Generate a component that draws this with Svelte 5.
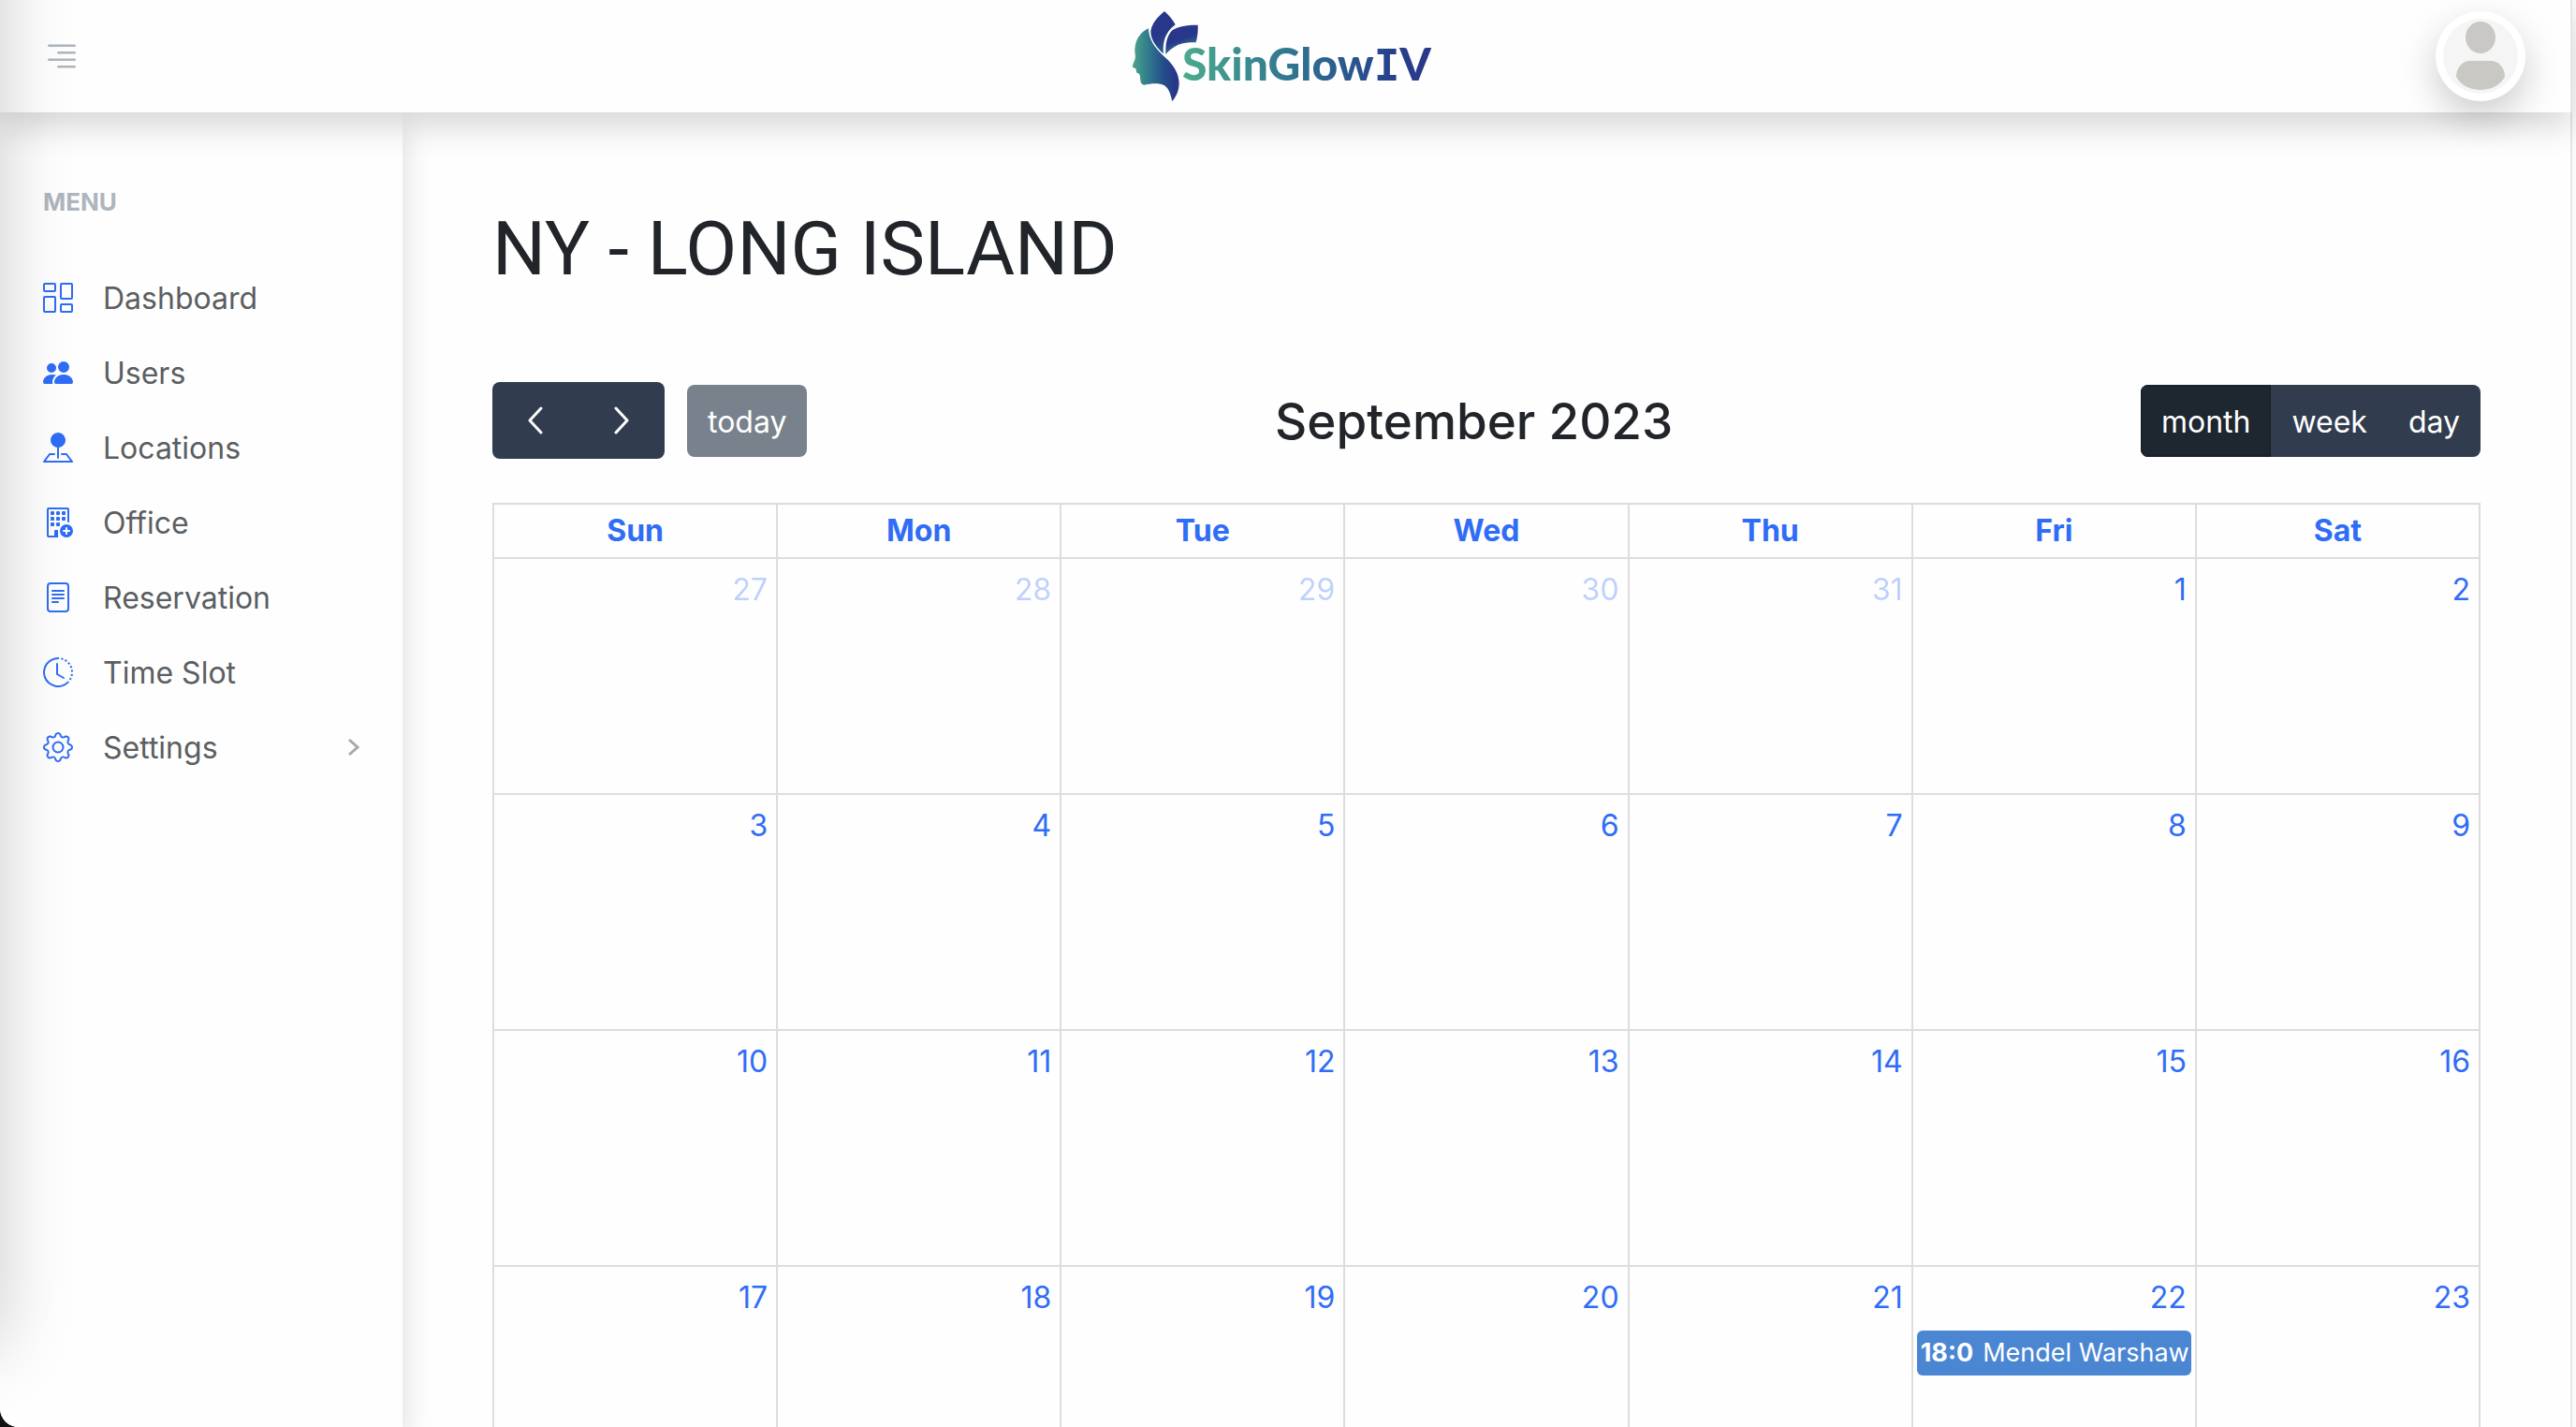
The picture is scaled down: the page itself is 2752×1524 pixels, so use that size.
<script>
  const menu = [
    { label: 'Dashboard', icon: 'dashboard' },
    { label: 'Users', icon: 'users' },
    { label: 'Locations', icon: 'locations' },
    { label: 'Office', icon: 'office' },
    { label: 'Reservation', icon: 'reservation' },
    { label: 'Time Slot', icon: 'clock' },
    { label: 'Settings', icon: 'gear', expandable: true }
  ];

  const icons = {
    dashboard: [
      'M6 1v3H1V1h5zM1 0a1 1 0 0 0-1 1v3a1 1 0 0 0 1 1h5a1 1 0 0 0 1-1V1a1 1 0 0 0-1-1H1zm14 12v3h-5v-3h5zm-5-1a1 1 0 0 0-1 1v3a1 1 0 0 0 1 1h5a1 1 0 0 0 1-1v-3a1 1 0 0 0-1-1h-5zM6 8v7H1V8h5zM1 7a1 1 0 0 0-1 1v7a1 1 0 0 0 1 1h5a1 1 0 0 0 1-1V8a1 1 0 0 0-1-1H1zm14-6v7h-5V1h5zm-5-1a1 1 0 0 0-1 1v7a1 1 0 0 0 1 1h5a1 1 0 0 0 1-1V1a1 1 0 0 0-1-1h-5z'
    ],
    users: [
      'M7 14s-1 0-1-1 1-4 5-4 5 3 5 4-1 1-1 1H7Zm4-6a3 3 0 1 0 0-6 3 3 0 0 0 0 6Zm-5.784 6A2.238 2.238 0 0 1 5 13c0-1.355.68-2.75 1.936-3.72A6.325 6.325 0 0 0 5 9c-4 0-5 3-5 4s1 1 1 1h4.216ZM4.5 8a2.5 2.5 0 1 0 0-5 2.5 2.5 0 0 0 0 5Z'
    ],
    locations: [
      'M3.1 11.2a.5.5 0 0 1 .4-.2H6a.5.5 0 0 1 0 1H3.75L1.5 15h13l-2.25-3H10a.5.5 0 0 1 0-1h2.5a.5.5 0 0 1 .4.2l3 4a.5.5 0 0 1-.4.8H.5a.5.5 0 0 1-.4-.8l3-4z',
      'M4 4a4 4 0 1 1 4.5 3.969V13.5a.5.5 0 0 1-1 0V7.97A4 4 0 0 1 4 3.999z'
    ],
    office: [
      'M12.5 16a3.5 3.5 0 1 0 0-7 3.5 3.5 0 0 0 0 7Zm.5-5v1h1a.5.5 0 0 1 0 1h-1v1a.5.5 0 0 1-1 0v-1h-1a.5.5 0 0 1 0-1h1v-1a.5.5 0 0 1 1 0Z',
      'M2 1a1 1 0 0 1 1-1h10a1 1 0 0 1 1 1v6.5a.5.5 0 0 1-1 0V1H3v14h3v-2.5a.5.5 0 0 1 .5-.5H8v4H3a1 1 0 0 1-1-1V1Z',
      ...[[4, 2], [7, 2], [10, 2], [4, 5], [7, 5], [10, 5], [4, 8], [7, 8]].map(
        ([x, y]) => `M${x + 0.5} ${y}h1a.5.5 0 0 1 .5.5v1a.5.5 0 0 1-.5.5h-1a.5.5 0 0 1-.5-.5v-1a.5.5 0 0 1 .5-.5z`
      )
    ],
    reservation: [
      'M5 4a.5.5 0 0 0 0 1h6a.5.5 0 0 0 0-1H5zm-.5 2.5A.5.5 0 0 1 5 6h6a.5.5 0 0 1 0 1H5a.5.5 0 0 1-.5-.5zM5 8a.5.5 0 0 0 0 1h6a.5.5 0 0 0 0-1H5zm0 2a.5.5 0 0 0 0 1h3a.5.5 0 0 0 0-1H5z',
      'M2 2a2 2 0 0 1 2-2h8a2 2 0 0 1 2 2v12a2 2 0 0 1-2 2H4a2 2 0 0 1-2-2V2zm10-1H4a1 1 0 0 0-1 1v12a1 1 0 0 0 1 1h8a1 1 0 0 0 1-1V2a1 1 0 0 0-1-1z'
    ],
    clock: [
      'M8.515 1.019A7 7 0 0 0 8 1V0a8 8 0 0 1 .589.022l-.074.997zm2.004.45a7.003 7.003 0 0 0-.985-.299l.219-.976c.383.086.76.2 1.126.342l-.36.933zm1.37.71a7.01 7.01 0 0 0-.439-.27l.493-.87a8.025 8.025 0 0 1 .979.654l-.615.789a6.996 6.996 0 0 0-.418-.302zm1.834 1.79a6.99 6.99 0 0 0-.653-.796l.724-.69c.27.285.52.59.747.91l-.818.576zm.744 1.352a7.08 7.08 0 0 0-.214-.468l.893-.45a7.976 7.976 0 0 1 .45 1.088l-.95.313a7.023 7.023 0 0 0-.179-.483zm.53 2.507a6.991 6.991 0 0 0-.1-1.025l.985-.17c.067.386.106.778.116 1.17l-1 .025zm-.131 1.538c.033-.17.06-.339.081-.51l.993.123a7.957 7.957 0 0 1-.23 1.155l-.964-.267c.046-.165.086-.332.12-.501zm-.952 2.379c.184-.29.346-.594.486-.908l.914.405c-.16.36-.345.706-.555 1.038l-.845-.535zm-.964 1.205c.122-.122.239-.248.35-.378l.758.653a8.073 8.073 0 0 1-.401.432l-.707-.707z',
      'M8 1a7 7 0 1 0 4.95 11.95l.707.707A8.001 8.001 0 1 1 8 0v1z',
      'M7.5 3a.5.5 0 0 1 .5.5v5.21l3.248 1.856a.5.5 0 0 1-.496.868l-3.5-2A.5.5 0 0 1 7 9V3.5a.5.5 0 0 1 .5-.5z'
    ],
    gear: [
      'M8 4.754a3.246 3.246 0 1 0 0 6.492 3.246 3.246 0 0 0 0-6.492zM5.754 8a2.246 2.246 0 1 1 4.492 0 2.246 2.246 0 0 1-4.492 0z',
      'M9.796 1.343c-.527-1.79-3.065-1.79-3.592 0l-.094.319a.873.873 0 0 1-1.255.52l-.292-.16c-1.64-.892-3.433.902-2.54 2.541l.159.292a.873.873 0 0 1-.52 1.255l-.319.094c-1.79.527-1.79 3.065 0 3.592l.319.094a.873.873 0 0 1 .52 1.255l-.16.292c-.892 1.64.901 3.434 2.541 2.54l.292-.159a.873.873 0 0 1 1.255.52l.094.319c.527 1.79 3.065 1.79 3.592 0l.094-.319a.873.873 0 0 1 1.255-.52l.292.16c1.64.893 3.434-.902 2.54-2.541l-.159-.292a.873.873 0 0 1 .52-1.255l.319-.094c1.79-.527 1.79-3.065 0-3.592l-.319-.094a.873.873 0 0 1-.52-1.255l.16-.292c.893-1.64-.902-3.433-2.541-2.54l-.292.159a.873.873 0 0 1-1.255-.52l-.094-.319zm-2.633.283c.246-.835 1.428-.835 1.674 0l.094.319a1.873 1.873 0 0 0 2.693 1.115l.291-.16c.764-.415 1.6.42 1.184 1.185l-.159.292a1.873 1.873 0 0 0 1.116 2.692l.318.094c.835.246.835 1.428 0 1.674l-.319.094a1.873 1.873 0 0 0-1.115 2.693l.16.291c.415.764-.42 1.6-1.185 1.184l-.291-.159a1.873 1.873 0 0 0-2.693 1.116l-.094.318c-.246.835-1.428.835-1.674 0l-.094-.319a1.873 1.873 0 0 0-2.692-1.115l-.292.16c-.764.415-1.6-.42-1.184-1.185l.159-.291A1.873 1.873 0 0 0 1.945 8.93l-.319-.094c-.835-.246-.835-1.428 0-1.674l.319-.094A1.873 1.873 0 0 0 3.06 4.377l-.16-.292c-.415-.764.42-1.6 1.185-1.184l.292.159a1.873 1.873 0 0 0 2.692-1.115l.094-.319z'
    ]
  };

  const weekdays = ['Sun', 'Mon', 'Tue', 'Wed', 'Thu', 'Fri', 'Sat'];
  const events = { 22: { time: '18:0', title: 'Mendel Warshaw' } };

  // Four weeks starting on Sunday, August 27
  const weeks = Array.from({ length: 4 }, (_, w) =>
    Array.from({ length: 7 }, (_, d) => {
      const n = w * 7 + d - 4;
      return n > 0 ? { day: n, other: false, event: events[n] } : { day: n + 31, other: true };
    })
  );

  const views = ['month', 'week', 'day'];
  let view = $state('month');
</script>

<div class="shell">
  <header class="topbar">
    <button class="toggle" aria-label="Toggle menu">
      <svg viewBox="0 0 16 16" fill="none" stroke="currentColor" stroke-linecap="round">
        <path d="M2.5 3.5h11M6.5 6.5h7M2.5 9.5h11M6.5 12.5h7" />
      </svg>
    </button>
    <a class="brand" href="#home">
      <svg viewBox="63 30 216 297" aria-hidden="true">
        <defs>
          <linearGradient id="face" x1="0" x2="1">
            <stop offset="0.05" stop-color="#479f8c" />
            <stop offset="0.3" stop-color="#337f8c" />
            <stop offset="0.65" stop-color="#24508a" />
            <stop offset="0.9" stop-color="#27378a" />
          </linearGradient>
          <linearGradient id="leafA" x1="0.3" y1="0.3" x2="0.6" y2="1">
            <stop offset="0.35" stop-color="#29378a" />
            <stop offset="1" stop-color="#23618d" />
          </linearGradient>
          <linearGradient id="leafB" x1="0.4" y1="0.4" x2="0.6" y2="0.9">
            <stop offset="0.2" stop-color="#28378a" />
            <stop offset="1" stop-color="#2b838e" />
          </linearGradient>
        </defs>
        <path fill="url(#face)" d="M117 88C90 100 74 125 73 156c0 14 4 22 0 32-3 9-8 17-7 24 4 3 10 2 11 6-1 4 2 6 1 10 2 4 6 3 9 6 4 5 2 10 4 18 0 11 4 17 13 17 21-4 47-7 64 2 15 10 20 29 25 51 12-16 22-32 22-60-1-27-15-51-35-72-24-23-62-53-63-102Z" />
        <path fill="url(#leafA)" d="M168 33c-23 19-42 42-44 65 0 27 20 52 41 71-3-28 1-67 38-93-8-16-21-31-35-43Z" />
        <path fill="url(#leafB)" d="M275 77c-40 0-68 5-84 19-15 16-20 42-19 75 18-21 45-42 97-38 5-18 7-36 6-56Z" />
      </svg>
      <span class="wordmark">SkinGlow<span class="slab">I</span>V</span>
    </a>
    <button class="avatar" aria-label="Account">
      <svg viewBox="0 0 80 80" aria-hidden="true">
        <circle cx="40" cy="40" r="40" fill="#f5f5f5" />
        <ellipse cx="40" cy="20" rx="16" ry="17" fill="#c9c8c5" />
        <path fill="#c9c8c5" d="M29 45h22c9 0 15 8 15 17-5 9-15 14-26 14s-21-5-26-14c0-9 6-17 15-17Z" />
      </svg>
    </button>
  </header>

  <nav class="sidebar" aria-label="Menu">
    <h2>MENU</h2>
    <ul>
      {#each menu as item}
        <li>
          <a href="#{item.icon}">
            <svg class="icon" viewBox="0 0 16 16" fill="currentColor" aria-hidden="true">
              {#each icons[item.icon] as d}
                <path {d} />
              {/each}
            </svg>
            <span>{item.label}</span>
            {#if item.expandable}
              <svg class="caret" viewBox="0 0 12 20" fill="none" stroke="currentColor" aria-hidden="true">
                <path d="m1 2 9 8-9 8" />
              </svg>
            {/if}
          </a>
        </li>
      {/each}
    </ul>
  </nav>

  <main>
    <h1>NY - LONG ISLAND</h1>

    <div class="toolbar">
      <div class="left">
        <div class="group">
          <button class="arrow" aria-label="Previous month">
            <svg viewBox="0 0 18 30"><path d="m15 2-12 13 12 13" /></svg>
          </button>
          <button class="arrow" aria-label="Next month">
            <svg viewBox="0 0 18 30"><path d="m3 2 12 13-12 13" /></svg>
          </button>
        </div>
        <button class="today" disabled>today</button>
      </div>
      <h2>September 2023</h2>
      <div class="group">
        {#each views as v}
          <button class:active={view === v} aria-pressed={view === v} onclick={() => (view = v)}>{v}</button>
        {/each}
      </div>
    </div>

    <table>
      <thead>
        <tr>
          {#each weekdays as name}
            <th scope="col">{name}</th>
          {/each}
        </tr>
      </thead>
      <tbody>
        {#each weeks as week}
          <tr>
            {#each week as cell}
              <td>
                <a class="day" class:other={cell.other} href="#day-{cell.day}">{cell.day}</a>
                {#if cell.event}
                  <a class="event" href="#event"><b>{cell.event.time}</b><span>{cell.event.title}</span></a>
                {/if}
              </td>
            {/each}
          </tr>
        {/each}
      </tbody>
    </table>
  </main>
  <div class="edge" aria-hidden="true"></div>
</div>

<style>
  :global(body) {
    background: #111;
  }

  .shell {
    --blue: #2f6df6;
    --navy: #313d4e;
    --shadow: 0 16px 32px rgba(0, 0, 0, 0.15);
    position: relative;
    box-sizing: border-box;
    display: grid;
    grid-template: 120px minmax(0, 1fr) / 430px minmax(0, 1fr);
    height: 100vh;
    overflow: hidden;
    padding-right: 4px;
    background: linear-gradient(#fafafa, #fafafa) right / 4px 100% no-repeat, #fefefe;
    border-bottom-left-radius: 20px;
    font: 400 32px/48px Inter, 'Noto Sans', sans-serif;
    color: #212529;
  }

  button {
    margin: 0;
    border: 0;
    font: inherit;
    cursor: pointer;
  }

  a {
    color: inherit;
    text-decoration: none;
  }

  svg {
    display: block;
  }

  .topbar {
    grid-column: 1 / -1;
    z-index: 2;
    display: grid;
    grid-template-columns: 1fr auto 1fr;
    align-items: center;
    padding: 0 48px 0 46px;
    background: #fefefe;
    border-right: 2px solid #e5e5e5;
    box-shadow: var(--shadow);
  }

  .toggle {
    justify-self: start;
    padding: 0;
    background: none;
    color: #adb5bd;
  }

  .toggle svg {
    width: 40px;
  }

  .brand {
    display: flex;
    align-items: center;
    margin-right: 6px;
  }

  .brand > svg {
    width: 72px;
    height: 99px;
  }

  .wordmark {
    margin-left: -18px;
    padding-top: 18px;
    font: 900 48px/48px Lato, sans-serif;
    color: transparent;
    background: linear-gradient(90deg, #4bab8d, #2f7391 45%, #27408b 85%, #2a378a);
    background-clip: text;
  }

  .slab {
    font: 700 46px/48px 'DejaVu Sans Mono', monospace;
  }

  .avatar {
    justify-self: end;
    padding: 8px;
    border-radius: 50%;
    background: #fff;
    box-shadow: 0 16px 40px rgba(0, 0, 0, 0.2);
  }

  .avatar svg {
    width: 80px;
  }

  .sidebar {
    z-index: 1;
    padding: 72px 46px;
    background: #fefefe;
    box-shadow: var(--shadow);
  }

  .sidebar h2 {
    margin: 0;
    font: 700 26px/48px Inter, sans-serif;
    color: #adb5bd;
  }

  .sidebar ul {
    margin: 38px 0 0;
    padding: 0;
    list-style: none;
  }

  .sidebar a {
    display: flex;
    align-items: center;
    height: 80px;
    color: #5b5e62;
  }

  .sidebar span {
    padding-top: 2px;
  }

  .icon {
    width: 32px;
    margin-right: 32px;
    color: var(--blue);
  }

  .caret {
    width: 12px;
    margin-left: auto;
    stroke-width: 3;
    color: #a8a8a8;
  }

  main {
    overflow: auto;
    scrollbar-width: none;
    padding: 96px 96px 0;
    border-right: 2px solid #e5e5e5;
  }

  h1 {
    margin: 0;
    font: 400 80px/100px Roboto, sans-serif;
  }

  .toolbar {
    display: flex;
    align-items: center;
    justify-content: space-between;
    margin: 92px 0 47px;
  }

  .toolbar h2 {
    margin: 0;
    padding-top: 2px;
    font: 500 53px/64px Inter, sans-serif;
  }

  .left {
    display: flex;
    align-items: center;
    gap: 24px;
  }

  .group {
    display: flex;
    overflow: hidden;
    border-radius: 8px;
  }

  .toolbar button {
    padding: 16px 22px 13px;
    background: var(--navy);
    color: #fff;
  }

  .toolbar .active {
    background: #1e262f;
    box-shadow: inset 0 0 0 2px #19212a;
  }

  .toolbar .arrow {
    padding: 26px 37px;
  }

  .arrow svg {
    width: 18px;
    fill: none;
    stroke: #fff;
    stroke-width: 3;
    stroke-linecap: round;
    stroke-linejoin: round;
  }

  .toolbar .today {
    border-radius: 8px;
    background: #79828c;
  }

  table {
    width: 100%;
    border-collapse: collapse;
    table-layout: fixed;
  }

  th,
  td {
    padding: 0;
    border: 2px solid #ddd;
  }

  th {
    padding: 4px;
    font-weight: 700;
    color: var(--blue);
  }

  td {
    height: 250px;
    vertical-align: top;
  }

  .day {
    display: block;
    padding: 9px 9px 7px;
    text-align: right;
    color: var(--blue);
  }

  .other {
    opacity: 0.3;
  }

  .event {
    display: flex;
    gap: 10px;
    margin: 4px;
    padding: 0 4px;
    overflow: hidden;
    border-radius: 6px;
    background: #4b86d3;
    color: #fff;
    font-size: 27px;
    white-space: nowrap;
  }

  .edge {
    position: absolute;
    z-index: 3;
    top: -100px;
    bottom: 84px;
    left: -100px;
    width: 100px;
    box-shadow: 0 0 80px rgba(0, 0, 0, 0.2);
    pointer-events: none;
  }
</style>
